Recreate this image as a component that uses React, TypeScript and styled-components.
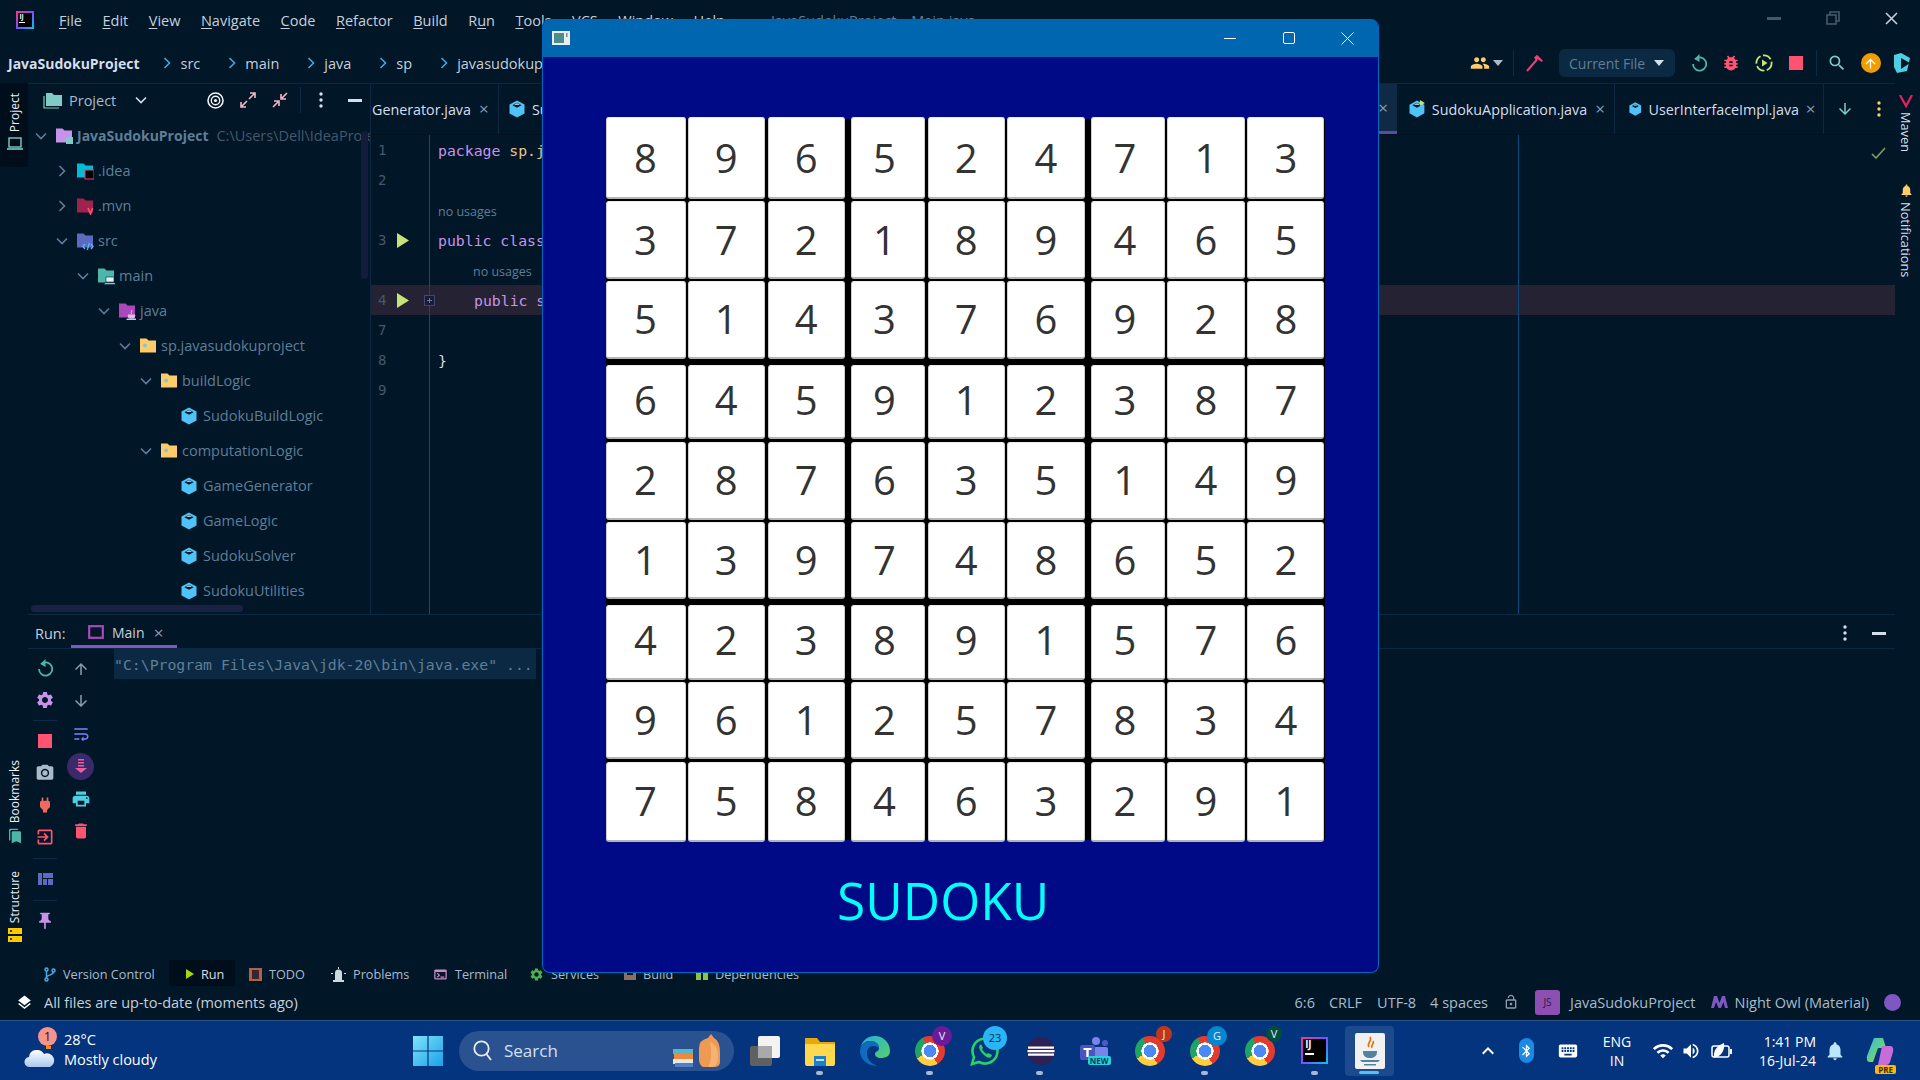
import React from 'react';
import styled, { createGlobalStyle } from 'styled-components';
import {
  MdArrowDownward, MdArrowUpward, MdBluetooth, MdBookmarks, MdBugReport, MdCameraAlt, MdDelete,
  MdExitToApp, MdKeyboard, MdKeyboardArrowUp, MdLayers, MdLockOpen, MdNotifications, MdPeople,
  MdPower, MdPrint, MdPushPin, MdSearch, MdSettings, MdTerminal, MdVolumeUp, MdWifi, MdWrapText,
} from 'react-icons/md';

const UI_FONT = `'Open Sans', 'Noto Sans', sans-serif`;
const MONO_FONT = `'DejaVu Sans Mono', 'Liberation Mono', monospace`;

const GlobalStyle = createGlobalStyle`
  html, body { margin: 0; padding: 0; background: #011627; }
  * { box-sizing: border-box; }
`;

const Root = styled.div`
  position: relative;
  width: 1920px;
  height: 1080px;
  overflow: hidden;
  display: flex;
  flex-direction: column;
  background: #011627;
  color: #d6deeb;
  font-family: ${UI_FONT};
  font-size: 14.5px;
`;

/* ---------- top rows ---------- */
const TitleRow = styled.div`
  height: 40px;
  flex: none;
  display: flex;
  align-items: center;
  padding-left: 16px;
  position: relative;
`;

const Menu = styled.div`
  display: flex;
  margin-left: 25px;
  gap: 20.5px;
`;

const MenuItem = styled.span`
  color: #c5d0dc;
  white-space: nowrap;
`;

const MenuKey = styled.span`
  text-decoration: underline;
  text-underline-offset: 2px;
`;

const IdeTitle = styled.span`
  margin-left: 46px;
  color: #5f7e97;
  white-space: nowrap;
`;

const WinControls = styled.div`
  margin-left: auto;
  display: flex;
  align-items: center;
  gap: 45px;
  padding: 0 22px 4px 0;
  color: #5f7e97;
`;

const NavRow = styled.div`
  height: 43px;
  flex: none;
  display: flex;
  align-items: center;
  padding-left: 8px;
  padding-top: 3px;
`;

const ProjectCrumb = styled.b`
  font-weight: 700;
  font-size: 14px;
  color: #d6deeb;
  margin-right: 24px;
`;

const Crumb = styled.span`
  display: inline-flex;
  align-items: center;
  gap: 9px;
  margin-right: 28px;
  color: #c5d0dc;
  white-space: nowrap;
`;

const NavTools = styled.div`
  position: absolute;
  left: 1469px;
  display: flex;
  align-items: center;
`;

const ToolSlot = styled.div<{ $w: number }>`
  width: ${(p) => p.$w}px;
  flex: none;
  display: flex;
  align-items: center;
  justify-content: center;
`;

const ToolDivider = styled.div`
  width: 1px;
  height: 26px;
  background: #0f2a44;
`;

const RunConfig = styled.div`
  width: 116px;
  height: 28px;
  flex: none;
  border-radius: 6px;
  background: #0b2942;
  display: flex;
  align-items: center;
  justify-content: space-between;
  padding: 0 11px 0 10px;
  color: #5f7e97;
  margin: 0 11px;
  white-space: nowrap;
  font-size: 14px;
`;

const Caret = styled.div<{ $c?: string }>`
  width: 0;
  height: 0;
  border-left: 5px solid transparent;
  border-right: 5px solid transparent;
  border-top: 6px solid ${(p) => p.$c || '#d6deeb'};
`;

const StopSquare = styled.div`
  width: 14px;
  height: 14px;
  background: #ff5370;
`;

const UpdateDot = styled.div`
  width: 20px;
  height: 20px;
  border-radius: 50%;
  background: #f09d00;
  display: flex;
  align-items: center;
  justify-content: center;
  color: #fff;
`;

/* ---------- main area ---------- */
const Workspace = styled.div`
  height: 877px;
  flex: none;
  display: flex;
`;

const LeftStripe = styled.div`
  width: 28px;
  flex: none;
  display: flex;
  flex-direction: column;
  align-items: center;
  padding-bottom: 18px;
`;

const StripeActive = styled.div`
  width: 100%;
  height: 84px;
  background: #000e1b;
  display: flex;
  flex-direction: column;
  align-items: center;
  padding: 10px 0 0 2px;
  margin-bottom: auto;
`;

const StripeItem = styled.div<{ $gap?: number; $pl?: number }>`
  display: flex;
  flex-direction: column;
  align-items: center;
  gap: 5px;
  margin-top: ${(p) => p.$gap || 0}px;
  padding-left: ${(p) => p.$pl || 0}px;
`;

const StripeLabel = styled.span`
  writing-mode: vertical-rl;
  transform: rotate(180deg);
  font-size: 12px;
  color: #e8eef4;
  line-height: 14px;
`;

const RightStripe = styled.div`
  width: 25px;
  flex: none;
  display: flex;
  flex-direction: column;
  align-items: center;
  padding: 12px 3px 0 0;
  gap: 4px;
`;

const RightLabel = styled.span<{ $mb?: number }>`
  writing-mode: vertical-rl;
  font-size: 12.8px;
  color: #d6deeb;
  line-height: 14px;
  margin-bottom: ${(p) => p.$mb || 0}px;
`;

const Center = styled.div`
  flex: 1;
  min-width: 0;
  display: flex;
  flex-direction: column;
`;

const UpperArea = styled.div`
  height: 532px;
  flex: none;
  display: flex;
  border-bottom: 1px solid #0b2942;
`;

/* ---------- project tree ---------- */
const ProjectPanel = styled.div`
  width: 343px;
  flex: none;
  position: relative;
  overflow: hidden;
  border-top: 1px solid #0b2942;
  border-right: 1px solid #0b2942;
`;

const PanelHeader = styled.div`
  height: 34px;
  display: flex;
  align-items: center;
  padding: 0 0 2px 15px;
`;

const PanelTitle = styled.span`
  margin: 0 19px 0 6px;
  color: #a9bbcb;
`;

const PanelTools = styled.div`
  position: absolute;
  left: 179px;
  display: flex;
  align-items: center;
  gap: 16px;
`;

const PanelSep = styled(ToolDivider)`
  margin: 0 2px 0 -4px;
`;

const PanelMinus = styled.div`
  margin-left: 9px;
  display: flex;
`;

const Tree = styled.div`
  display: flex;
  flex-direction: column;
`;

const TreeRow = styled.div<{ $level: number }>`
  height: 35px;
  display: flex;
  align-items: center;
  white-space: nowrap;
  padding-left: ${(p) => 3 + 21 * p.$level}px;
  color: #5f7e97;
`;

const Chevron = styled.span`
  width: 24px;
  flex: none;
  display: flex;
  justify-content: center;
  padding-right: 4px;
  color: #5f7e97;
`;

const TreeIcon = styled.span`
  width: 22px;
  flex: none;
  display: flex;
`;

const TreeName = styled.span<{ $bold?: boolean }>`
  font-weight: ${(p) => (p.$bold ? 700 : 400)};
  font-size: ${(p) => (p.$bold ? 14 : 14.5)}px;
`;

const TreeHint = styled.span`
  color: #44596b;
  margin-left: 8px;
`;

const VScroll = styled.div`
  position: absolute;
  left: 333px;
  top: 47px;
  width: 7px;
  height: 148px;
  border-radius: 4px;
  background: #141c3b;
`;

const HScroll = styled.div`
  position: absolute;
  left: 3px;
  bottom: 2px;
  width: 212px;
  height: 7px;
  border-radius: 4px;
  background: #1b2145;
`;

/* ---------- editor ---------- */
const Editor = styled.div`
  flex: 1;
  min-width: 0;
  position: relative;
  display: flex;
  flex-direction: column;
  overflow: hidden;
  border-top: 1px solid #0b2942;
`;

const Tabs = styled.div`
  height: 51px;
  flex: none;
  display: flex;
  align-items: stretch;
  justify-content: space-between;
  border-bottom: 1px solid #01111f;
  font-size: 14.3px;
`;

const TabGroup = styled.div`
  display: flex;
  align-items: stretch;
`;

const Tab = styled.div<{ $active?: boolean; $w?: number; $pl?: number }>`
  display: flex;
  align-items: center;
  gap: 7px;
  padding: 0 7px 0 ${(p) => p.$pl ?? 12}px;
  white-space: nowrap;
  color: #d6deeb;
  border-right: 1px solid #0b2942;
  width: ${(p) => (p.$w ? `${p.$w}px` : 'auto')};
  ${(p) => p.$active && 'background: #0f2a44; border-bottom: 3px solid #5f4b9e; border-right: 0; justify-content: flex-end;'}
`;

const TabClose = styled.span`
  color: #8a9cae;
  font-size: 17px;
  line-height: 14px;
  margin-left: -1px;
  width: 14px;
  text-align: center;
`;

const TabTools = styled.div`
  display: flex;
  align-items: center;
  width: 71px;
  justify-content: space-between;
  padding: 0 14px 0 12px;
`;

const CodeRow = styled.div<{ $current?: boolean }>`
  height: 30px;
  display: flex;
  background: ${(p) => (p.$current ? '#242233' : 'transparent')};
`;

const Gutter = styled.div<{ $fill?: boolean }>`
  width: 59px;
  flex: ${(p) => (p.$fill ? 1 : 'none')};
  display: flex;
  align-items: center;
  padding-left: 7px;
  border-right: 1px solid #3a3670;
  color: #44596b;
  font-family: ${MONO_FONT};
  font-size: 14px;
  position: relative;
`;

const LineNo = styled.span`
  width: 19px;
`;

const FoldBox = styled.span`
  position: absolute;
  right: -6px;
  display: flex;
`;

const Code = styled.div<{ $indent?: number; $hint?: boolean }>`
  padding-left: ${(p) => 8 + (p.$indent || 0)}px;
  padding-top: ${(p) => (p.$hint ? 2 : 0)}px;
  display: flex;
  align-items: center;
  white-space: pre;
  font-family: ${(p) => (p.$hint ? UI_FONT : MONO_FONT)};
  font-size: ${(p) => (p.$hint ? 12.5 : 14.8)}px;
  color: ${(p) => (p.$hint ? '#5f7e97' : '#d6deeb')};
`;

const Keyword = styled.span`
  color: #c792ea;
`;

const Pkg = styled.span`
  color: #ecc48d;
`;

const MarginGuide = styled.div`
  position: absolute;
  left: 1147px;
  top: 51px;
  bottom: 0;
  width: 1px;
  background: #0b4a80;
`;

const CheckMark = styled.div`
  position: absolute;
  right: 9px;
  top: 60px;
`;

/* ---------- run panel ---------- */
const RunPanel = styled.div`
  flex: 1;
  min-height: 0;
  display: flex;
  flex-direction: column;
`;

const RunHeader = styled.div`
  height: 34px;
  flex: none;
  display: flex;
  align-items: center;
  padding: 3px 0 0 7px;
  border-bottom: 1px solid #0b2942;
  color: #c5d0dc;
`;

const RunLabel = styled.span`
  width: 36px;
  flex: none;
`;

const RunTab = styled.div`
  align-self: stretch;
  margin-top: -3px;
  padding: 5px 0 0 17px;
  width: 106px;
  display: flex;
  align-items: center;
  gap: 8px;
  font-size: 14px;
  border-bottom: 3px solid #7e57c2;
`;

const RunHeaderTools = styled.div`
  margin-left: auto;
  display: flex;
  align-items: center;
  gap: 25px;
  padding-right: 9px;
`;

const RunBody = styled.div`
  flex: 1;
  display: flex;
`;

const RunCol = styled.div<{ $w: number }>`
  width: ${(p) => p.$w}px;
  flex: none;
  display: flex;
  flex-direction: column;
  align-items: center;
  padding-top: 3px;
`;

const RunIcon = styled.div<{ $h?: number }>`
  height: ${(p) => p.$h || 32}px;
  width: 100%;
  display: flex;
  align-items: center;
  justify-content: center;
`;

const ScrollCircle = styled.div`
  width: 27px;
  height: 27px;
  border-radius: 50%;
  background: #3b2a6b;
  display: flex;
  align-items: center;
  justify-content: center;
`;

const RunGap = styled.div<{ $h: number }>`
  height: ${(p) => p.$h}px;
  width: 24px;
  display: flex;
  align-items: center;
  &::after { content: ''; width: 100%; height: 1px; background: #0f2a44; }
`;

const ConsoleLine = styled.div`
  margin-left: 15px;
  width: 422px;
  height: 30px;
  background: #0b2942;
  display: flex;
  align-items: center;
  font-family: ${MONO_FONT};
  font-size: 14.8px;
  color: #5f7e97;
  white-space: pre;
`;

/* ---------- bottom bars ---------- */
const ToolBar = styled.div`
  height: 26px;
  flex: none;
  display: flex;
  align-items: stretch;
  padding-left: 44px;
  font-size: 12.7px;
  color: #a9bbcb;
`;

const ToolItem = styled.div<{ $active?: boolean; $w: number; $ml?: number }>`
  width: ${(p) => p.$w}px;
  flex: none;
  display: flex;
  align-items: center;
  gap: 7px;
  white-space: nowrap;
  padding-top: 2px;
  margin-left: ${(p) => p.$ml || 0}px;
  ${(p) => p.$active && 'background: #000e1b; padding-left: 17px; color: #d6deeb;'}
`;

const StatusBar = styled.div`
  height: 34px;
  flex: none;
  display: flex;
  align-items: center;
  padding: 0 19px 2px 16px;
  color: #c5d0dc;
`;

const StatusMsg = styled.span`
  margin-left: 11px;
`;

const StatusRight = styled.div`
  margin-left: auto;
  display: flex;
  align-items: center;
  color: #a9bbcb;
`;

const StatusCell = styled.span<{ $mr: number }>`
  display: inline-flex;
  align-items: center;
  white-space: nowrap;
  margin-right: ${(p) => p.$mr}px;
`;

const JsBadge = styled.span`
  width: 25px;
  height: 25px;
  border-radius: 3px;
  background: #8e4fb3;
  color: #2a1c3f;
  display: flex;
  align-items: center;
  justify-content: center;
  font-size: 10px;
`;

const ThemeDot = styled.span`
  width: 17px;
  height: 17px;
  border-radius: 50%;
  background: #7e57c2;
`;

/* ---------- taskbar ---------- */
const Taskbar = styled.div`
  flex: 1;
  display: flex;
  align-items: center;
  background: #04347e;
  border-top: 1px solid #2a5184;
`;

const Weather = styled.div`
  width: 400px;
  flex: none;
  display: flex;
  align-items: center;
  padding: 0 0 2px 24px;
  gap: 8px;
  color: #fff;
  font-size: 14.5px;
  line-height: 20px;
`;

const WeatherIcon = styled.div`
  position: relative;
  width: 32px;
  height: 36px;
  display: flex;
  align-items: flex-end;
`;

const AlertBadge = styled.span`
  position: absolute;
  left: 14px;
  top: -5px;
  width: 19px;
  height: 19px;
  border-radius: 50%;
  background: #f7938a;
  color: #3a1010;
  font-size: 13px;
  line-height: 19px;
  text-align: center;
`;

const Tile = styled.div<{ $w?: number }>`
  width: ${(p) => p.$w || 55}px;
  height: 59px;
  flex: none;
  position: relative;
  display: flex;
  align-items: center;
  justify-content: center;
`;

const ActiveTile = styled(Tile)`
  &::before {
    content: '';
    position: absolute;
    left: 3px;
    right: 3px;
    top: 5px;
    bottom: 4px;
    border-radius: 4px;
    background: #1c4a8c;
  }
  & > * { position: relative; }
  &::after {
    content: '';
    position: absolute;
    bottom: 6px;
    left: 17px;
    width: 20px;
    height: 3px;
    border-radius: 2px;
    background: #4fc3f7;
  }
`;

const RunningDot = styled.span`
  position: absolute;
  bottom: 5px;
  left: 24px;
  width: 7px;
  height: 4px;
  border-radius: 2px;
  background: #a7b9d2;
`;

const SearchBox = styled.div`
  width: 275px;
  height: 40px;
  flex: none;
  margin: 0 3px 0 4px;
  border-radius: 20px;
  background: #2a5290;
  display: flex;
  align-items: center;
  padding: 0 13px 0 14px;
  gap: 12px;
  color: #d5e0ef;
  font-size: 17px;
`;

const SearchArt = styled.div`
  margin-left: auto;
  display: flex;
`;

const CountBadge = styled.span<{ $c: string; $size?: number; $fg?: string }>`
  position: absolute;
  right: 5px;
  top: 5px;
  width: ${(p) => p.$size || 20}px;
  height: ${(p) => p.$size || 20}px;
  border-radius: 50%;
  background: ${(p) => p.$c};
  color: ${(p) => p.$fg || '#e6edf5'};
  font-size: 11px;
  line-height: ${(p) => p.$size || 20}px;
  text-align: center;
`;

const Chrome = styled.div`
  width: 30px;
  height: 30px;
  border-radius: 50%;
  background:
    radial-gradient(circle, #4a8af4 0 29%, #fff 30% 40%, transparent 41%),
    conic-gradient(from 30deg, #e33b2e 0 120deg, #ffcd40 120deg 210deg, #1fa463 210deg 300deg, #e33b2e 300deg);
`;

const IntelliJ = styled.div<{ $size: number }>`
  width: ${(p) => p.$size}px;
  height: ${(p) => p.$size}px;
  background: #000;
  border: 2px solid;
  border-image: linear-gradient(135deg, #ff318c, #7c4dff 50%, #07c3f2) 1;
  color: #fff;
  font-family: ${UI_FONT};
  font-weight: 700;
  font-size: ${(p) => p.$size * 0.36}px;
  line-height: 1;
  padding: ${(p) => p.$size * 0.04}px 0 0 ${(p) => p.$size * 0.08}px;
  display: flex;
  flex-direction: column;
  gap: ${(p) => p.$size * 0.12}px;
  &::after { content: ''; width: 42%; height: ${(p) => (p.$size > 20 ? 2 : 1)}px; background: #fff; }
`;

const TeamsWrap = styled.div`
  position: relative;
  width: 30px;
  height: 30px;
`;

const NewTag = styled.span`
  position: absolute;
  right: -1px;
  bottom: 1px;
  padding: 0 2px;
  background: #23d4e0;
  color: #083a5a;
  font-size: 8px;
  font-weight: 700;
  line-height: 9px;
  border-radius: 2px;
`;

const Tray = styled.div`
  margin-left: auto;
  display: flex;
  align-items: center;
  height: 100%;
  padding-right: 14px;
  color: #fff;
`;

const TrayCell = styled.div<{ $w: number }>`
  width: ${(p) => p.$w}px;
  flex: none;
  display: flex;
  align-items: center;
  justify-content: center;
  position: relative;
`;

const TrayText = styled.div<{ $w: number; $align: string }>`
  width: ${(p) => p.$w}px;
  flex: none;
  text-align: ${(p) => p.$align};
  font-size: 14px;
  line-height: 19px;
  white-space: nowrap;
`;

const BluePill = styled.div`
  width: 15px;
  height: 25px;
  border-radius: 8px;
  background: #1e88e5;
  display: flex;
  align-items: center;
  justify-content: center;
`;

const PreTag = styled.span`
  position: absolute;
  right: 10px;
  bottom: -8px;
  background: #ffb900;
  color: #3a2a00;
  font-size: 8px;
  font-weight: 700;
  line-height: 9px;
  padding: 0 3px;
  border-radius: 2px;
`;

/* ---------- floating sudoku window ---------- */
const SudokuWindow = styled.div`
  position: absolute;
  left: 542px;
  top: 19px;
  width: 837px;
  height: 954px;
  display: flex;
  flex-direction: column;
  background: #000a87;
  border: 1px solid #0067c0;
  border-top: 0;
  border-radius: 8px;
  overflow: hidden;
`;

const WindowBar = styled.div`
  height: 38px;
  flex: none;
  background: #0066b0;
  display: flex;
  align-items: center;
  padding-left: 9px;
`;

const WindowButtons = styled.div`
  margin-left: auto;
  display: flex;
  align-items: center;
  gap: 45.5px;
  padding-right: 24px;
`;

const Board = styled.div`
  margin: 60px 0 0 62.5px;
  width: 719px;
  height: 724.5px;
  display: grid;
  grid-template-columns: 80px 2px 77.5px 2.5px 77.5px 5.5px 74px 3px 77.5px 2px 78px 5.8px 74.2px 2.2px 77.6px 2.7px 77px;
  grid-template-rows: 82px 2px 78px 2px 77.5px 6.5px 74px 2.5px 78px 2px 77.5px 6px 75px 2px 77px 2.5px 80px;
  background-image: linear-gradient(#000, #000);
  background-size: 100% calc(100% - 4px);
  background-position: 0 2px;
  background-repeat: no-repeat;
`;

const Cell = styled.div<{ $r: number; $c: number }>`
  grid-row: ${(p) => p.$r * 2 + 1};
  grid-column: ${(p) => p.$c * 2 + 1};
  background: #fff;
  border-radius: 3px;
  border: 1px solid #cfcfcf;
  border-top-color: #ececec;
  border-bottom: 2px solid #b5b5b5;
  display: flex;
  align-items: center;
  justify-content: center;
  padding-right: ${(p) => (p.$c === 3 || p.$c === 6 ? 6 : 0)}px;
  padding-bottom: ${(p) => (p.$r === 3 || p.$r === 6 ? 4 : 0)}px;
  font-size: 40px;
  color: #333;
  line-height: 1;
`;

const SudokuTitle = styled.div`
  margin: 22px 0 0 294px;
  font-size: 51.5px;
  line-height: 72px;
  color: #00ffff;
`;

/* ---------- icons ---------- */
const Cube = ({ mark }: { mark?: boolean }) => (
  <svg width="16" height="18" viewBox="0 0 16 18">
    <path d="M8 .5 15.5 4.600v8.800L8 17.500.5 13.400V4.600Z" fill="#4fc3f7" />
    <path d="M8 2.800 12.600 5.300 8 7.800 3.400 5.300Z" fill="#01203a" />
    <path d="M8 3.200 5 5 8 4.700 11 5Z" fill="#fff" opacity=".9" />
    {mark && <path d="M11 0 16 3 11 6z" fill="#c5e478" />}
  </svg>
);

const Folder = ({ c, children }: { c: string; children?: React.ReactNode }) => (
  <svg width="18" height="18" viewBox="0 0 18 18">
    <path d="M1 1.500h6.500l2 2H17v12H1z" fill={c} />
    {children}
  </svg>
);

const folderIcons: Record<string, React.ReactNode> = {
  project: <Folder c="#c792ea"><rect x="11" y="10" width="7" height="7" fill="#80cbc4" /></Folder>,
  idea: <Folder c="#00bcd4"><rect x="9" y="8" width="9" height="9" fill="#000" stroke="#ff318c" /></Folder>,
  mvn: <Folder c="#a0234e"><path d="m12 11 2.500 6 2-6" stroke="#ff5370" strokeWidth="1.600" fill="none" /></Folder>,
  src: <Folder c="#5c6bc0"><path d="m9 12-2 2.500L9 17m6-5 2 2.500L15 17m-3.700 1 2-7" stroke="#64b5f6" strokeWidth="1.300" fill="none" /></Folder>,
  main: <Folder c="#4db6ac"><path d="M9 10h8v5H9zM7.500 16h11v1.500h-11z" fill="#e0f2f1" stroke="#01203a" strokeWidth=".6" /></Folder>,
  java: <Folder c="#ab47bc"><path d="M10 13h7l-1 3h-5zM9 17h9v1H9zM13.500 8c1 2-1 2 0 4" stroke="#e1bee7" strokeWidth="1" fill="#e1bee7" /></Folder>,
  pkg: <Folder c="#ffcb6b"><circle cx="6" cy="8.500" r="2" fill="#80cbc4" /></Folder>,
};

const ChevronDown = () => (
  <svg width="12" height="8" viewBox="0 0 12 8"><path d="m1 1.500 5 5 5-5" stroke="currentColor" strokeWidth="1.600" fill="none" /></svg>
);

const ChevronRight = () => (
  <svg width="8" height="12" viewBox="0 0 8 12"><path d="m1.500 1 5 5-5 5" stroke="currentColor" strokeWidth="1.600" fill="none" /></svg>
);

const NavChevron = () => (
  <svg width="8" height="12" viewBox="0 0 8 12"><path d="m1.500 1 5 5-5 5" stroke="#3fa9e6" strokeWidth="1.600" fill="none" /></svg>
);

const Play = ({ w = 12, c = '#c5e478' }: { w?: number; c?: string }) => (
  <svg width={w} height={w * 1.25} viewBox="0 0 12 15"><path d="M0 0 12 7.500 0 15z" fill={c} /></svg>
);

const Dots = ({ c = '#d6deeb' }: { c?: string }) => (
  <svg width="4" height="16" viewBox="0 0 4 16"><circle cx="2" cy="2" r="1.700" fill={c} /><circle cx="2" cy="8" r="1.700" fill={c} /><circle cx="2" cy="14" r="1.700" fill={c} /></svg>
);

const MinusBar = () => (
  <svg width="14" height="3" viewBox="0 0 14 3"><rect width="14" height="3" fill="#d6deeb" /></svg>
);

const Refresh = ({ c }: { c: string }) => (
  <svg width="16" height="18" viewBox="0 0 16 18" fill="none">
    <path d="M4 5.200A6.600 6.600 0 1 1 2 10" stroke={c} strokeWidth="1.800" />
    <path d="M8.500 0 3.500 5l5 3z" fill={c} />
  </svg>
);

const Hammer = () => (
  <svg width="18" height="18" viewBox="0 0 18 18">
    <path d="M1 17 11 5.500" stroke="#ec407a" strokeWidth="2" />
    <path d="M8 3.500 11 .8l6 6-1.200 1.200-4-2.800-1.800 1.200z" fill="#ec407a" />
  </svg>
);

const RunCircle = () => (
  <svg width="18" height="18" viewBox="0 0 18 18" fill="none">
    <circle cx="9" cy="9" r="7.600" stroke="#c5e478" strokeWidth="1.800" strokeDasharray="9 2.500" />
    <path d="M7 5.500 12.500 9 7 12.500z" fill="#c5e478" />
  </svg>
);

const Logo = () => (
  <svg width="18" height="20" viewBox="0 0 18 20">
    <path d="M1 2 8 0l9 5-3 13-10 2-3-6z" fill="#4dd0e1" />
    <path d="M8 5 17 10 8 16z" fill="#011627" />
  </svg>
);

const Target = () => (
  <svg width="17" height="17" viewBox="0 0 17 17" fill="none" stroke="#eef2f6">
    <circle cx="8.500" cy="8.500" r="7.500" strokeWidth="1.600" />
    <circle cx="8.500" cy="8.500" r="4.200" strokeWidth="1.400" />
    <circle cx="8.500" cy="8.500" r="1.600" fill="#eef2f6" stroke="none" />
  </svg>
);

const ArrowsOut = () => (
  <svg width="16" height="16" viewBox="0 0 16 16" stroke="#f4b6c8" strokeWidth="1.600" fill="none">
    <path d="M9 7 15 1M10 1h5v5M7 9l-6 6M1 10v5h5" />
  </svg>
);

const ArrowsIn = () => (
  <svg width="16" height="16" viewBox="0 0 16 16" stroke="#f4b6c8" strokeWidth="1.600" fill="none">
    <path d="M10 6 15 1M9 2v5h5M6 10l-5 5M2 9h5v5" />
  </svg>
);

const FolderTeal = () => (
  <svg width="20" height="17" viewBox="0 0 20 17">
    <path d="M1 4v12h15" stroke="#80cbc4" strokeWidth="1.200" fill="none" />
    <path d="M3 1h6l2 2h8v11H3z" fill="#80cbc4" />
  </svg>
);

const Laptop = ({ c = '#80cbc4' }: { c?: string }) => (
  <svg width="16" height="13" viewBox="0 0 16 13" fill="none">
    <rect x="2" y="1" width="12" height="9" stroke={c} strokeWidth="1.400" />
    <path d="M0 12h16" stroke={c} strokeWidth="1.600" />
  </svg>
);

const WindowCtl = ({ kind }: { kind: 'min' | 'max' | 'close' }) => (
  <svg width="13" height="13" viewBox="0 0 13 13" fill="none" stroke="#fff" strokeWidth="1">
    {kind === 'min' && <path d="M0 6.500h12" />}
    {kind === 'max' && <rect x=".5" y=".5" width="11" height="11" rx="1.500" />}
    {kind === 'close' && <path d="m.5.500 12 12m0-12-12 12" />}
  </svg>
);

const Cloud = () => (
  <svg width="31" height="22" viewBox="0 0 31 22">
    <defs><linearGradient id="cl" x1="0" x2="0" y1="0" y2="1"><stop offset="0" stopColor="#fff" /><stop offset="1" stopColor="#a9c8ee" /></linearGradient></defs>
    <path d="M6 21a5 5 0 0 1-1-10 7 7 0 0 1 7-7 8 8 0 0 1 8 4 6 6 0 0 1 6 13z" fill="url(#cl)" />
    <rect x="22" y="0" width="5" height="3" fill="#f08a24" />
  </svg>
);

const WinLogo = () => (
  <svg width="30" height="30" viewBox="0 0 30 30">
    <defs><linearGradient id="wl" x1="0" x2="1" y1="0" y2="1"><stop offset="0" stopColor="#7fe4f8" /><stop offset="1" stopColor="#1aa0ea" /></linearGradient></defs>
    <path d="M0 0h14.400v14.400H0zM15.600 0H30v14.400H15.600zM0 15.600h14.400V30H0zM15.600 15.600H30V30H15.600z" fill="url(#wl)" />
  </svg>
);

const SearchGlyph = () => (
  <svg width="19" height="21" viewBox="0 0 19 21" fill="none" stroke="#e6edf5" strokeWidth="1.800">
    <circle cx="8.500" cy="8.500" r="7.200" /><path d="m13.500 14 4.500 6" />
  </svg>
);

const BooksBag = () => (
  <svg width="48" height="34" viewBox="0 0 48 34">
    <path d="M0 15h20v5H0z" fill="#57b6c7" /><path d="M1 20h19v5H1z" fill="#ef8a3a" /><path d="M0 25h20v5H0z" fill="#e6e6e6" /><path d="M2 29h18v4H2z" fill="#4f7fc9" />
    <path d="M26 14q0-8 9-10l3-4 3 4q6 3 6 14v10q0 5-6 5H30q-4-2-4-8z" fill="#ef9a52" />
    <path d="M37 8q8 3 8 14t-6 11l-4 0q5-8 2-25z" fill="#f5b273" />
  </svg>
);

const TaskView = () => (
  <svg width="30" height="30" viewBox="0 0 30 30">
    <rect x="0" y="10" width="22" height="20" rx="2" fill="#5f6062" />
    <rect x="8" y="0" width="22" height="22" rx="2" fill="#f3f3f3" />
    <rect x="8" y="10" width="14" height="12" fill="#a9a9ab" />
  </svg>
);

const Explorer = () => (
  <svg width="30" height="30" viewBox="0 0 30 30">
    <path d="M0 2h12l3 4h15v22H0z" fill="#e8a80c" /><path d="M0 8h30v20a2 2 0 0 1-2 2H2a2 2 0 0 1-2-2z" fill="#ffd84d" />
    <rect x="9" y="20" width="12" height="10" fill="#1b7fd0" /><rect x="11" y="23" width="8" height="2" fill="#bfe3ff" />
  </svg>
);

const Edge = () => (
  <svg width="30" height="30" viewBox="0 0 30 30">
    <defs><linearGradient id="eg" x1="0" x2="1" y1="0" y2="1"><stop offset="0" stopColor="#28b0d8" /><stop offset="1" stopColor="#55d06a" /></linearGradient></defs>
    <path d="M15 0a15 15 0 0 1 15 15c0 5-4 7-9 7-4 0-6-2-6-4 0-3 4-2 4-6 0-4-4-7-9-7-4 0-7 2-9 5C3 4 8 0 15 0z" fill="url(#eg)" />
    <path d="M1 10c3-4 7-5 10-5 5 0 8 3 8 7-5-4-12-2-12 5 0 6 4 11 10 12.600-9 1-17-6-17-14 0-2 .4-4 1-5.600z" fill="#0d6bc0" />
  </svg>
);

const WhatsApp = () => (
  <svg width="30" height="30" viewBox="0 0 30 30" fill="none">
    <path d="M2 28l2-7a12.500 12.500 0 1 1 5 5z" stroke="#25d366" strokeWidth="2.600" />
    <path d="M10 9c-2 2 0 6 3 9s6 5 8 3l1-2-4-2-1 1c-2-.5-4-3-5-5l1-1-2-4z" fill="#25d366" />
  </svg>
);

const Eclipse = () => (
  <svg width="30" height="30" viewBox="0 0 30 30">
    <path d="M15 0a15 15 0 0 0 0 30 15 15 0 0 1 0-30z" fill="#f7941e" />
    <circle cx="16" cy="15" r="14" fill="#2c2255" />
    <path d="M3 10.500h26v2.200H3zM2.500 14h27v2.200h-27zM3 17.500h26v2.200H3z" fill="#fff" />
  </svg>
);

const Teams = () => (
  <TeamsWrap>
    <svg width="30" height="30" viewBox="0 0 30 30">
      <circle cx="16" cy="5" r="4" fill="#7b83eb" /><circle cx="25" cy="7" r="3" fill="#5059c9" />
      <rect x="14" y="11" width="14" height="13" rx="2" fill="#7b83eb" />
      <rect x="0" y="9" width="15" height="15" rx="2" fill="#4b53bc" />
      <path d="M3.500 12h8v2H8.700v7H6.300v-7H3.500z" fill="#fff" />
    </svg>
    <NewTag>NEW</NewTag>
  </TeamsWrap>
);

const JavaCup = () => (
  <svg width="30" height="36" viewBox="0 0 30 36">
    <rect width="30" height="36" rx="2" fill="#f1f1f1" />
    <path d="M15 4c3 4-4 6-1 10M18 8c2 3-3 4-1 7" stroke="#e76f00" strokeWidth="1.600" fill="none" />
    <path d="M8 18h14v1c0 4-3 6-7 6s-7-2-7-6zM5 27h20l-2 2H7zM9 31h12v1.500H9z" fill="#5382a1" />
  </svg>
);

const Battery = () => (
  <svg width="22" height="20" viewBox="0 0 22 20" fill="none" stroke="#fff" strokeWidth="1.500">
    <rect x="1" y="5" width="17" height="11" rx="2" />
    <path d="M20 8v5" strokeWidth="2" />
    <path d="M3 16C2 9 7 4 13 2c1 6-2 12-7 14z" fill="#fff" stroke="none" />
  </svg>
);

const Copilot = () => (
  <svg width="28" height="30" viewBox="0 0 28 30">
    <defs><linearGradient id="cp" x1="0" x2="1" y1="0" y2="1"><stop offset="0" stopColor="#3fb6e8" /><stop offset=".5" stopColor="#5ed08a" /><stop offset="1" stopColor="#f5c542" /></linearGradient></defs>
    <path d="M8 2h9l3 10-8 0-5 14H3q-3-1-2-6z" fill="url(#cp)" />
    <path d="M16 10h9q3 1 2 6l-3 10q-1 3-4 3h-8z" fill="#c86dd7" />
  </svg>
);

/* ---------- data ---------- */
const MENU: [string, string, string][] = [
  ['', 'F', 'ile'], ['', 'E', 'dit'], ['', 'V', 'iew'], ['', 'N', 'avigate'], ['', 'C', 'ode'], ['', 'R', 'efactor'],
  ['', 'B', 'uild'], ['R', 'u', 'n'], ['', 'T', 'ools'], ['', 'V', 'CS'], ['', 'W', 'indow'], ['', 'H', 'elp'],
];

type Node = { level: number; name: string; open?: boolean; icon?: string; bold?: boolean; hint?: string };
const TREE: Node[] = [
  { level: 0, name: 'JavaSudokuProject', open: true, icon: 'project', bold: true, hint: 'C:\\Users\\Dell\\IdeaProjects' },
  { level: 1, name: '.idea', open: false, icon: 'idea' },
  { level: 1, name: '.mvn', open: false, icon: 'mvn' },
  { level: 1, name: 'src', open: true, icon: 'src' },
  { level: 2, name: 'main', open: true, icon: 'main' },
  { level: 3, name: 'java', open: true, icon: 'java' },
  { level: 4, name: 'sp.javasudokuproject', open: true, icon: 'pkg' },
  { level: 5, name: 'buildLogic', open: true, icon: 'pkg' },
  { level: 6, name: 'SudokuBuildLogic' },
  { level: 5, name: 'computationLogic', open: true, icon: 'pkg' },
  { level: 6, name: 'GameGenerator' },
  { level: 6, name: 'GameLogic' },
  { level: 6, name: 'SudokuSolver' },
  { level: 6, name: 'SudokuUtilities' },
];

const GRID = [
  [8, 9, 6, 5, 2, 4, 7, 1, 3],
  [3, 7, 2, 1, 8, 9, 4, 6, 5],
  [5, 1, 4, 3, 7, 6, 9, 2, 8],
  [6, 4, 5, 9, 1, 2, 3, 8, 7],
  [2, 8, 7, 6, 3, 5, 1, 4, 9],
  [1, 3, 9, 7, 4, 8, 6, 5, 2],
  [4, 2, 3, 8, 9, 1, 5, 7, 6],
  [9, 6, 1, 2, 5, 7, 8, 3, 4],
  [7, 5, 8, 4, 6, 3, 2, 9, 1],
];

const App: React.FC = () => (
  <Root>
    <GlobalStyle />
    <TitleRow>
      <IntelliJ $size={18}>IJ</IntelliJ>
      <Menu>
        {MENU.map(([a, k, b]) => (
          <MenuItem key={a + k + b}>{a}<MenuKey>{k}</MenuKey>{b}</MenuItem>
        ))}
      </Menu>
      <IdeTitle>JavaSudokuProject – Main.java</IdeTitle>
      <WinControls>
        <svg width="14" height="3"><rect width="14" height="3" fill="#44596b" /></svg>
        <svg width="14" height="14" viewBox="0 0 14 14" fill="none" stroke="#44596b" strokeWidth="1.600"><rect x="1" y="4" width="9" height="9" /><path d="M4 4V1h9v9h-3" /></svg>
        <svg width="13" height="13" viewBox="0 0 13 13" stroke="#c5d0dc" strokeWidth="1.600"><path d="m1 1 11 11M12 1 1 12" /></svg>
      </WinControls>
    </TitleRow>

    <NavRow>
      <ProjectCrumb>JavaSudokuProject</ProjectCrumb>
      {['src', 'main', 'java', 'sp', 'javasudokuproject'].map((c) => (
        <Crumb key={c}><NavChevron />{c}</Crumb>
      ))}
      <NavTools>
        <ToolSlot $w={22}><MdPeople size={20} color="#ffcb6b" /></ToolSlot>
        <ToolSlot $w={14}><Caret $c="#a9bbcb" /></ToolSlot>
        <ToolSlot $w={16}><ToolDivider /></ToolSlot>
        <ToolSlot $w={27}><Hammer /></ToolSlot>
        <RunConfig>Current File<Caret /></RunConfig>
        <ToolSlot $w={26}><Refresh c="#4db6ac" /></ToolSlot>
        <ToolSlot $w={38}><MdBugReport size={20} color="#ff5370" /></ToolSlot>
        <ToolSlot $w={28}><RunCircle /></ToolSlot>
        <ToolSlot $w={36}><StopSquare /></ToolSlot>
        <ToolSlot $w={4}><ToolDivider /></ToolSlot>
        <ToolSlot $w={38}><MdSearch size={20} color="#80cbc4" /></ToolSlot>
        <ToolSlot $w={29}><UpdateDot><MdArrowUpward size={15} /></UpdateDot></ToolSlot>
        <ToolSlot $w={34}><Logo /></ToolSlot>
      </NavTools>
    </NavRow>

    <Workspace>
      <LeftStripe>
        <StripeActive>
          <StripeItem><StripeLabel>Project</StripeLabel><Laptop /></StripeItem>
        </StripeActive>
        <StripeItem $pl={2}>
          <StripeLabel>Bookmarks</StripeLabel>
          <MdBookmarks size={16} color="#4db6ac" style={{ transform: 'scaleX(-1)' }} />
        </StripeItem>
        <StripeItem $gap={27} $pl={2}>
          <StripeLabel>Structure</StripeLabel>
          <svg width="14" height="14" viewBox="0 0 14 14"><path d="M0 0h14v6H0zM0 8h14v6H0z" fill="#ffcb00" /><circle cx="3" cy="3" r="1" fill="#011627" /><circle cx="3" cy="11" r="1" fill="#011627" /></svg>
        </StripeItem>
      </LeftStripe>

      <Center>
        <UpperArea>
          <ProjectPanel>
            <PanelHeader>
              <FolderTeal />
              <PanelTitle>Project</PanelTitle>
              <ChevronDown />
              <PanelTools>
                <Target />
                <ArrowsOut />
                <ArrowsIn />
                <PanelSep />
                <Dots />
                <PanelMinus><MinusBar /></PanelMinus>
              </PanelTools>
            </PanelHeader>
            <Tree>
              {TREE.map((n) => (
                <TreeRow key={n.name} $level={n.level}>
                  <Chevron>
                    {n.open === true && <ChevronDown />}
                    {n.open === false && <ChevronRight />}
                  </Chevron>
                  <TreeIcon>{n.icon ? folderIcons[n.icon] : <Cube />}</TreeIcon>
                  <TreeName $bold={n.bold}>{n.name}</TreeName>
                  {n.hint && <TreeHint>{n.hint}</TreeHint>}
                </TreeRow>
              ))}
            </Tree>
            <VScroll />
            <HScroll />
          </ProjectPanel>

          <Editor>
            <Tabs>
              <TabGroup>
                <Tab $pl={1}>Generator.java<TabClose>×</TabClose></Tab>
                <Tab $pl={10}><Cube />SudokuBuildLogic.java<TabClose>×</TabClose></Tab>
              </TabGroup>
              <TabGroup>
                <Tab $active $w={120}><TabClose>×</TabClose></Tab>
                <Tab $w={218}><Cube mark />SudokuApplication.java<TabClose>×</TabClose></Tab>
                <Tab $w={209} $pl={14}><Cube />UserInterfaceImpl.java<TabClose>×</TabClose></Tab>
                <TabTools><MdArrowDownward size={18} color="#80cbc4" /><Dots c="#ffcb6b" /></TabTools>
              </TabGroup>
            </Tabs>
            <CodeRow><Gutter><LineNo>1</LineNo></Gutter><Code><Keyword>package </Keyword><Pkg>sp.javasudokuproject</Pkg>;</Code></CodeRow>
            <CodeRow><Gutter><LineNo>2</LineNo></Gutter></CodeRow>
            <CodeRow><Gutter /><Code $hint>no usages</Code></CodeRow>
            <CodeRow><Gutter><LineNo>3</LineNo><Play /></Gutter><Code><Keyword>public class </Keyword>Main {'{'}</Code></CodeRow>
            <CodeRow><Gutter /><Code $hint $indent={35}>no usages</Code></CodeRow>
            <CodeRow $current>
              <Gutter>
                <LineNo>4</LineNo><Play />
                <FoldBox>
                  <svg width="11" height="11" viewBox="0 0 11 11"><rect x=".5" y=".5" width="10" height="10" fill="#1a1a3a" stroke="#3a4a72" /><path d="M5.500 3v5M3 5.500h5" stroke="#5f7e97" /></svg>
                </FoldBox>
              </Gutter>
              <Code $indent={36}><Keyword>public static void </Keyword>main(String[] args) {'{ }'}</Code>
            </CodeRow>
            <CodeRow><Gutter><LineNo>7</LineNo></Gutter></CodeRow>
            <CodeRow><Gutter><LineNo>8</LineNo></Gutter><Code>{'}'}</Code></CodeRow>
            <CodeRow><Gutter><LineNo>9</LineNo></Gutter></CodeRow>
            <Gutter $fill />
            <MarginGuide />
            <CheckMark>
              <svg width="15" height="12" viewBox="0 0 15 12" fill="none" stroke="#7fa05f" strokeWidth="1.600"><path d="m1 7 4 4L14 1" /></svg>
            </CheckMark>
          </Editor>
        </UpperArea>

        <RunPanel>
          <RunHeader>
            <RunLabel>Run:</RunLabel>
            <RunTab>
              <svg width="16" height="15" viewBox="0 0 16 15" fill="none"><rect x="1.200" y="1.200" width="13.600" height="11.600" stroke="#ab47bc" strokeWidth="2.200" /></svg>
              Main
              <TabClose>×</TabClose>
            </RunTab>
            <RunHeaderTools><Dots /><MinusBar /></RunHeaderTools>
          </RunHeader>
          <RunBody>
            <RunCol $w={34}>
              <RunIcon><Refresh c="#4db6ac" /></RunIcon>
              <RunIcon><MdSettings size={20} color="#c792ea" /></RunIcon>
              <RunGap $h={9} />
              <RunIcon><StopSquare /></RunIcon>
              <RunIcon><MdCameraAlt size={20} color="#a9bbcb" /></RunIcon>
              <RunIcon><MdPower size={20} color="#f0695f" /></RunIcon>
              <RunIcon><MdExitToApp size={20} color="#ff5370" /></RunIcon>
              <RunGap $h={10} />
              <RunIcon>
                <svg width="15" height="12" viewBox="0 0 15 12"><path d="M0 0h4v12H0zM5 0h10v5H5zM5 6h4v6H5zM10 6h5v6h-5z" fill="#5c6bc0" /></svg>
              </RunIcon>
              <RunGap $h={10} />
              <RunIcon><MdPushPin size={20} color="#c792ea" /></RunIcon>
            </RunCol>
            <RunCol $w={37}>
              <RunIcon $h={33}><MdArrowUpward size={18} color="#8a9cae" /></RunIcon>
              <RunIcon $h={32}><MdArrowDownward size={18} color="#8a9cae" /></RunIcon>
              <RunIcon $h={33}><MdWrapText size={20} color="#7986ff" /></RunIcon>
              <RunIcon $h={32}>
                <ScrollCircle>
                  <svg width="12" height="16" viewBox="0 0 12 16"><path d="M3 1h6v1.500H3zM3 4h6v1.500H3zM3 7h6v1.500H3zM0 10h12l-6 5z" fill="#ec5f9e" /></svg>
                </ScrollCircle>
              </RunIcon>
              <RunIcon $h={33}><MdPrint size={20} color="#4dd0e1" /></RunIcon>
              <RunIcon $h={32}><MdDelete size={20} color="#ff5370" /></RunIcon>
            </RunCol>
            <ConsoleLine>"C:\Program Files\Java\jdk-20\bin\java.exe" ...</ConsoleLine>
          </RunBody>
        </RunPanel>
      </Center>

      <RightStripe>
        <svg width="14" height="13" viewBox="0 0 14 13" fill="none" stroke="#e91e63" strokeWidth="2.200"><path d="m1 0 6 11 6-11" /></svg>
        <RightLabel $mb={27}>Maven</RightLabel>
        <MdNotifications size={15} color="#ffcb6b" />
        <RightLabel>Notifications</RightLabel>
      </RightStripe>
    </Workspace>

    <ToolBar>
      <ToolItem $w={125}>
        <svg width="12" height="15" viewBox="0 0 12 15" fill="none" stroke="#4fa8e0" strokeWidth="1.500"><circle cx="2.500" cy="2.500" r="1.500" /><circle cx="2.500" cy="12.500" r="1.500" /><circle cx="9.500" cy="3.500" r="1.500" /><path d="M2.500 4v7M9.500 5C9.500 8 3 8 2.500 10" /></svg>
        Version Control
      </ToolItem>
      <ToolItem $w={66} $active>
        <Play w={8} c="#a5d610" />Run
      </ToolItem>
      <ToolItem $w={82} $ml={14}>
        <svg width="13" height="13" viewBox="0 0 13 13"><rect width="13" height="13" fill="#a8654a" /><rect x="3" y="2" width="7" height="9" fill="#3b2430" /></svg>
        TODO
      </ToolItem>
      <ToolItem $w={102}>
        <svg width="15" height="15" viewBox="0 0 15 15"><path d="M4 13V6a3.500 3.500 0 0 1 7 0v7zM2 13h11v2H2z" fill="#cfd8dc" /><path d="M7 0h1v2H7zM0 6h2v1H0zM13 6h2v1h-2z" fill="#cfd8dc" /></svg>
        Problems
      </ToolItem>
      <ToolItem $w={96}><MdTerminal size={15} color="#c78fc0" />Terminal</ToolItem>
      <ToolItem $w={95}><MdSettings size={15} color="#4caf50" />Services</ToolItem>
      <ToolItem $w={72}>
        <svg width="12" height="12" viewBox="0 0 12 12"><rect width="12" height="12" fill="#8d6e63" /><rect x="3" y="5" width="6" height="2" fill="#01111f" /></svg>
        Build
      </ToolItem>
      <ToolItem $w={110}>
        <svg width="12" height="12" viewBox="0 0 12 12"><path d="M0 2h5v10H0zM7 2h5v10H7z" fill="#8bc34a" /></svg>
        Dependencies
      </ToolItem>
    </ToolBar>

    <StatusBar>
      <MdLayers size={17} color="#fff" />
      <StatusMsg>All files are up-to-date (moments ago)</StatusMsg>
      <StatusRight>
        <StatusCell $mr={14}>6:6</StatusCell>
        <StatusCell $mr={15}>CRLF</StatusCell>
        <StatusCell $mr={14}>UTF-8</StatusCell>
        <StatusCell $mr={15}>4 spaces</StatusCell>
        <StatusCell $mr={16}><MdLockOpen size={16} color="#8a9cae" /></StatusCell>
        <StatusCell $mr={10}><JsBadge>JS</JsBadge></StatusCell>
        <StatusCell $mr={15}>JavaSudokuProject</StatusCell>
        <StatusCell $mr={7}>
          <svg width="17" height="12" viewBox="0 0 17 12"><path d="M0 12 3 0h3l2.500 7L11 0h3l3 12h-3l-1.500-6-2.500 6H7.500L5 6l-2 6z" fill="#7e57c2" /></svg>
        </StatusCell>
        <StatusCell $mr={15}>Night Owl (Material)</StatusCell>
        <ThemeDot />
      </StatusRight>
    </StatusBar>

    <Taskbar>
      <Weather>
        <WeatherIcon><Cloud /><AlertBadge>1</AlertBadge></WeatherIcon>
        <div>28°C<br />Mostly cloudy</div>
      </Weather>
      <Tile><WinLogo /></Tile>
      <SearchBox><SearchGlyph />Search<SearchArt><BooksBag /></SearchArt></SearchBox>
      <Tile><TaskView /></Tile>
      <Tile><Explorer /><RunningDot /></Tile>
      <Tile><Edge /></Tile>
      <Tile><Chrome /><CountBadge $c="#6a1b9a">V</CountBadge><RunningDot /></Tile>
      <Tile><WhatsApp /><CountBadge $c="#29b6f6" $size={24} $fg="#042a4a">23</CountBadge></Tile>
      <Tile><Eclipse /><RunningDot /></Tile>
      <Tile><Teams /></Tile>
      <Tile><Chrome /><CountBadge $c="#c0361c" $size={16}>J</CountBadge></Tile>
      <Tile><Chrome /><CountBadge $c="#0288d1">G</CountBadge><RunningDot /></Tile>
      <Tile><Chrome /><CountBadge $c="#004d40" $size={16}>V</CountBadge></Tile>
      <Tile><IntelliJ $size={27}>IJ</IntelliJ><RunningDot /></Tile>
      <ActiveTile><JavaCup /></ActiveTile>
      <Tray>
        <TrayCell $w={36}><MdKeyboardArrowUp size={24} /></TrayCell>
        <TrayCell $w={41}><BluePill><MdBluetooth size={16} /></BluePill></TrayCell>
        <TrayCell $w={41}><MdKeyboard size={22} /></TrayCell>
        <TrayText $w={58} $align="center">ENG<br />IN</TrayText>
        <TrayCell $w={34}><MdWifi size={22} /></TrayCell>
        <TrayCell $w={22}><MdVolumeUp size={20} /></TrayCell>
        <TrayCell $w={40}><Battery /></TrayCell>
        <TrayText $w={74} $align="right">1:41 PM<br />16-Jul-24</TrayText>
        <TrayCell $w={38}><MdNotifications size={22} color="#bde6fb" /></TrayCell>
        <TrayCell $w={52}><Copilot /><PreTag>PRE</PreTag></TrayCell>
      </Tray>
    </Taskbar>

    <SudokuWindow>
      <WindowBar>
        <svg width="18" height="14" viewBox="0 0 18 14"><rect width="18" height="14" fill="#e8eef2" /><rect x="2" y="2" width="10" height="10" fill="#4e8e8a" /><rect x="14" y="2" width="1.500" height="4" fill="#7a8a90" /></svg>
        <WindowButtons>
          <WindowCtl kind="min" />
          <WindowCtl kind="max" />
          <WindowCtl kind="close" />
        </WindowButtons>
      </WindowBar>
      <Board>
        {GRID.map((row, r) => row.map((n, c) => (
          <Cell key={`${r}-${c}`} $r={r} $c={c}>{n}</Cell>
        )))}
      </Board>
      <SudokuTitle>SUDOKU</SudokuTitle>
    </SudokuWindow>
  </Root>
);

export default App;
